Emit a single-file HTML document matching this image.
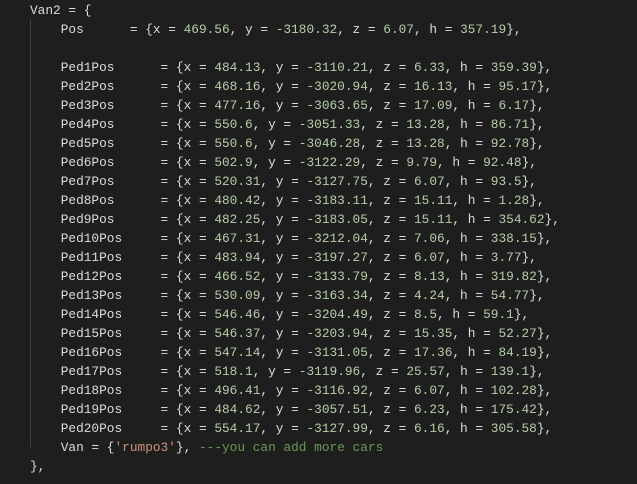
<!DOCTYPE html><html><head><style>
body{margin:0;background:#1e1e1e;width:637px;height:484px;overflow:hidden;position:relative}
pre{margin:0;position:absolute;left:30px;top:1px;font-family:"Liberation Mono",monospace;font-size:12.8px;line-height:19px;color:#dcdcdc;white-space:pre}
.n{color:#b5cea8}.s{color:#ce9178}.c{color:#6a9955}
.g{position:absolute;left:30px;top:20px;width:1px;height:427px;background:#404040}
</style></head><body><div class="g"></div><pre>Van2 = {
    Pos      = {x = <span class="n">469.56</span>, y = <span class="n">-3180.32</span>, z = <span class="n">6.07</span>, h = <span class="n">357.19</span>},

    Ped1Pos      = {x = <span class="n">484.13</span>, y = <span class="n">-3110.21</span>, z = <span class="n">6.33</span>, h = <span class="n">359.39</span>},
    Ped2Pos      = {x = <span class="n">468.16</span>, y = <span class="n">-3020.94</span>, z = <span class="n">16.13</span>, h = <span class="n">95.17</span>},
    Ped3Pos      = {x = <span class="n">477.16</span>, y = <span class="n">-3063.65</span>, z = <span class="n">17.09</span>, h = <span class="n">6.17</span>},
    Ped4Pos      = {x = <span class="n">550.6</span>, y = <span class="n">-3051.33</span>, z = <span class="n">13.28</span>, h = <span class="n">86.71</span>},
    Ped5Pos      = {x = <span class="n">550.6</span>, y = <span class="n">-3046.28</span>, z = <span class="n">13.28</span>, h = <span class="n">92.78</span>},
    Ped6Pos      = {x = <span class="n">502.9</span>, y = <span class="n">-3122.29</span>, z = <span class="n">9.79</span>, h = <span class="n">92.48</span>},
    Ped7Pos      = {x = <span class="n">520.31</span>, y = <span class="n">-3127.75</span>, z = <span class="n">6.07</span>, h = <span class="n">93.5</span>},
    Ped8Pos      = {x = <span class="n">480.42</span>, y = <span class="n">-3183.11</span>, z = <span class="n">15.11</span>, h = <span class="n">1.28</span>},
    Ped9Pos      = {x = <span class="n">482.25</span>, y = <span class="n">-3183.05</span>, z = <span class="n">15.11</span>, h = <span class="n">354.62</span>},
    Ped10Pos     = {x = <span class="n">467.31</span>, y = <span class="n">-3212.04</span>, z = <span class="n">7.06</span>, h = <span class="n">338.15</span>},
    Ped11Pos     = {x = <span class="n">483.94</span>, y = <span class="n">-3197.27</span>, z = <span class="n">6.07</span>, h = <span class="n">3.77</span>},
    Ped12Pos     = {x = <span class="n">466.52</span>, y = <span class="n">-3133.79</span>, z = <span class="n">8.13</span>, h = <span class="n">319.82</span>},
    Ped13Pos     = {x = <span class="n">530.09</span>, y = <span class="n">-3163.34</span>, z = <span class="n">4.24</span>, h = <span class="n">54.77</span>},
    Ped14Pos     = {x = <span class="n">546.46</span>, y = <span class="n">-3204.49</span>, z = <span class="n">8.5</span>, h = <span class="n">59.1</span>},
    Ped15Pos     = {x = <span class="n">546.37</span>, y = <span class="n">-3203.94</span>, z = <span class="n">15.35</span>, h = <span class="n">52.27</span>},
    Ped16Pos     = {x = <span class="n">547.14</span>, y = <span class="n">-3131.05</span>, z = <span class="n">17.36</span>, h = <span class="n">84.19</span>},
    Ped17Pos     = {x = <span class="n">518.1</span>, y = <span class="n">-3119.96</span>, z = <span class="n">25.57</span>, h = <span class="n">139.1</span>},
    Ped18Pos     = {x = <span class="n">496.41</span>, y = <span class="n">-3116.92</span>, z = <span class="n">6.07</span>, h = <span class="n">102.28</span>},
    Ped19Pos     = {x = <span class="n">484.62</span>, y = <span class="n">-3057.51</span>, z = <span class="n">6.23</span>, h = <span class="n">175.42</span>},
    Ped20Pos     = {x = <span class="n">554.17</span>, y = <span class="n">-3127.99</span>, z = <span class="n">6.16</span>, h = <span class="n">305.58</span>},
    Van = {<span class="s">'rumpo3'</span>}, <span class="c">---you can add more cars</span>
},</pre></body></html>
